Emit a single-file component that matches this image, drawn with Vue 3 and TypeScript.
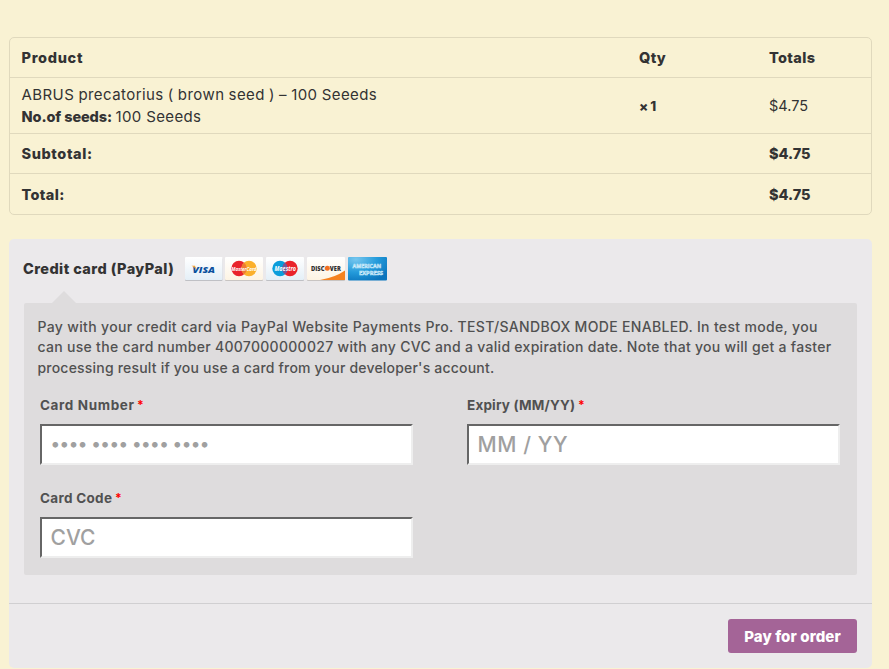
<script setup lang="ts">
import { ref } from 'vue'

interface OrderItem {
  name: string
  seeds: string
  qty: number
  total: string
}

const items: OrderItem[] = [
  { name: 'ABRUS precatorius ( brown seed ) – 100 Seeeds', seeds: '100 Seeeds', qty: 1, total: '$4.75' },
]
const sums = [
  { label: 'Subtotal:', cls: 'subtotal', value: '$4.75' },
  { label: 'Total:', cls: 'total', value: '$4.75' },
]
const notice = [
  'Pay with your credit card via PayPal Website Payments Pro. TEST/SANDBOX MODE ENABLED. In test mode, you',
  'can use the card number 4007000000027 with any CVC and a valid expiration date. Note that you will get a faster',
  "processing result if you use a card from your developer's account.",
]
const cardNumber = ref('')
const expiry = ref('')
const cvc = ref('')
</script>

<template>
  <main class="page">
    <section class="order">
      <div class="row head">
        <span class="h-product">Product</span><span class="h-qty">Qty</span><span class="h-totals">Totals</span>
      </div>
      <div v-for="item in items" :key="item.name" class="row item">
        <div class="product">
          <div class="name">{{ item.name }}</div>
          <div class="variation"><b>No.of seeds:</b><span>{{ item.seeds }}</span></div>
        </div>
        <b class="qty">× {{ item.qty }}</b>
        <span class="amount">{{ item.total }}</span>
      </div>
      <div v-for="sum in sums" :key="sum.label" class="row sum" :class="sum.cls">
        <span class="sum-label">{{ sum.label }}</span><span></span><span class="sum-value">{{ sum.value }}</span>
      </div>
    </section>

    <section class="payment">
      <div class="method">
        <span class="method-name">Credit card (PayPal)</span>
        <div class="cards">
          <svg width="39" height="25" viewBox="0 0 39 25">
            <defs><linearGradient id="pale" x2="0" y2="1"><stop stop-color="#fff" /><stop offset="1" stop-color="#e4eff7" /></linearGradient></defs>
            <rect x="1" y="2" width="37.500" height="23" rx="1" fill="#bfc0c5" />
            <rect x="1" y="1" width="37.500" height="23" rx="1" fill="url(#pale)" />
            <text x="8.500" y="17" class="visa" textLength="22.500" lengthAdjust="spacingAndGlyphs">VISA</text>
            <path d="M7.500 9.800h3.500l1.300 4.200Q11 11 7.500 9.800Z" fill="#f5a12c" />
          </svg>
          <svg width="39" height="25" viewBox="0 0 39 25">
            <defs><linearGradient id="cream" x2="0" y2="1"><stop stop-color="#fff" /><stop offset="1" stop-color="#fdf4e3" /></linearGradient></defs>
            <rect y="2" width="38" height="23" rx="1" fill="#c8c4c2" />
            <rect y="1" width="38" height="23" rx="1" fill="url(#cream)" />
            <circle cx="14" cy="12.500" r="7.700" fill="#e9232c" /><circle cx="24" cy="12.500" r="7.700" fill="#fbb02b" />
            <path d="M19 6.600a7.700 7.700 0 0 1 0 11.800 7.700 7.700 0 0 1 0-11.800Z" fill="#ef7a32" />
            <text x="6.500" y="15" class="brand mc" textLength="25" lengthAdjust="spacingAndGlyphs">MasterCard</text>
          </svg>
          <svg width="39" height="25" viewBox="0 0 39 25">
            <rect y="2" width="38" height="23" rx="1" fill="#bfc0c5" />
            <rect y="1" width="38" height="23" rx="1" fill="url(#pale)" />
            <circle cx="14" cy="12.500" r="7.700" fill="#0a9ddb" /><circle cx="24" cy="12.500" r="7.700" fill="#e9232c" />
            <path d="M19 6.600a7.700 7.700 0 0 1 0 11.800 7.700 7.700 0 0 1 0-11.800Z" fill="#74589a" />
            <text x="8.500" y="15" class="brand" textLength="21.500" lengthAdjust="spacingAndGlyphs">Maestro</text>
          </svg>
          <svg width="39" height="25" viewBox="0 0 39 25">
            <rect y="2" width="38" height="23" rx="1" fill="#c8c4c2" />
            <rect y="1" width="38" height="23" rx="1" fill="url(#cream)" />
            <path d="M13 24Q28 21.500 38 14.500V24Z" fill="#f58220" />
            <circle cx="20.300" cy="12.200" r="2.500" fill="#f26f21" />
            <text x="4" y="14.700" class="discover" textLength="13.500" lengthAdjust="spacingAndGlyphs">DISC</text>
            <text x="22.800" y="14.700" class="discover" textLength="11" lengthAdjust="spacingAndGlyphs">VER</text>
          </svg>
          <svg width="40" height="25" viewBox="0 0 40 25">
            <defs><radialGradient id="amex" cx=".2" cy=".1" r="1"><stop stop-color="#76c6ee" /><stop offset=".55" stop-color="#249bdb" /><stop offset="1" stop-color="#0b75bd" /></radialGradient></defs>
            <rect y="1" width="39" height="23.500" rx="1" fill="url(#amex)" />
            <text x="4.500" y="12" class="amex" textLength="28.500" lengthAdjust="spacingAndGlyphs">AMERICAN</text>
            <text x="11" y="18.500" class="amex" textLength="24" lengthAdjust="spacingAndGlyphs">EXPRESS</text>
          </svg>
        </div>
      </div>

      <div class="box">
        <svg class="arrow" width="24" height="12" viewBox="0 0 24 12"><path d="M0 12 12 0 24 12Z" fill="#dedcdd" /></svg>
        <p class="notice"><span v-for="(line, i) in notice" :key="i" :class="'line' + i">{{ line }}</span></p>
        <form class="fields" @submit.prevent>
          <label><span class="label"><b class="l-number">Card Number</b><i>*</i></span>
            <input v-model="cardNumber" class="number" placeholder="•••• •••• •••• ••••" /></label>
          <label><span class="label"><b class="l-expiry">Expiry (MM/YY)</b><i>*</i></span>
            <input v-model="expiry" class="expiry" placeholder="MM / YY" /></label>
          <label><span class="label"><b class="l-code">Card Code</b><i>*</i></span>
            <input v-model="cvc" class="cvc" placeholder="CVC" /></label>
        </form>
      </div>

      <footer class="actions"><button type="button"><span>Pay for order</span></button></footer>
    </section>
  </main>
</template>

<style>
body { background: #f9f2d3; }
</style>

<style scoped>
* { box-sizing: border-box; }
.page { height: 669px; padding: 37px 17px 0 9px; overflow: hidden; font-family: Inter, "Liberation Sans", sans-serif; font-size: 15px; color: #333; white-space: nowrap; }
.order { height: 178px; border: 1px solid #e0d9bd; border-radius: 5px; }
.row { display: grid; grid-template-columns: 617.5px 130px 1fr; align-items: center; padding-left: 11.500px; border-top: 1px solid #e0d9bd; }
.head { height: 39px; border-top: 0; font-weight: 800; font-size: 14.5px; }
.h-product { letter-spacing: .7px; }
.h-totals { letter-spacing: .35px; }
.item { height: 56px; font-size: 14.5px; }
.h-qty { letter-spacing: .3px; }
.name, .variation { height: 22px; line-height: 22px; font-size: 15px; letter-spacing: .37px; }
.name { word-spacing: -.5px; letter-spacing: .43px; }
.variation { display: flex; gap: 3.500px; }
.variation b { font-size: 14.5px; font-weight: 800; letter-spacing: -.1px; }
.qty { font-size: 13.500px; letter-spacing: -.5px; font-weight: 800; }
.sum { height: 40px; font-weight: 800; font-size: 14.5px; }
.subtotal .sum-label { letter-spacing: .6px; }
.total .sum-label { letter-spacing: .35px; }
.total { height: 41px; }
.payment { height: 429px; margin-top: 24px; background: #ebe9eb; border-radius: 5px; }
.method { height: 64px; padding: 17px 0 0 14px; display: flex; }
.method-name { width: 161px; font-weight: 800; font-size: 14.5px; line-height: 26px; letter-spacing: .42px; }
.cards { display: flex; gap: 2px; }
.cards svg { display: block; }
.visa { font: italic 800 9.500px "Open Sans", sans-serif; fill: #0b519e; }
.brand { font: italic 700 6.500px "Open Sans", sans-serif; fill: #fff; }
.mc { font-size: 6px; }
.discover { font: 800 7px "Open Sans", sans-serif; fill: #303030; }
.amex { font: 700 5.500px "Open Sans", sans-serif; fill: #69bce8; stroke: #d3edfa; stroke-width: .5px; }
.box { position: relative; width: 833px; height: 272px; margin-left: 15px; padding: 14px 13.500px 0; border-radius: 2px; background: #dedcdd; color: #515151; }
.arrow { position: absolute; left: 28px; top: -12px; }
.notice { margin: 0; height: 62px; display: grid; grid-template-rows: 20px 21px 20px; font-size: 14px; font-weight: 500; line-height: 20px; }
.line0 { letter-spacing: .335px; }
.line1 { letter-spacing: .295px; }
.line2 { letter-spacing: .2px; }
.fields { display: grid; grid-template-columns: 373px 373px; column-gap: 54px; padding: 16px 0 0 2.500px; row-gap: 24px; }
.fields label { display: block; height: 69px; }
.label { display: flex; height: 29px; line-height: 20px; font-size: 13.5px; }
.l-number { width: 97px; letter-spacing: .62px; }
.l-expiry { width: 111px; letter-spacing: .18px; }
.l-code { width: 75px; letter-spacing: .3px; }
.label i { font-style: normal; font-weight: 700; color: #f00; font-size: 12px; }
input { display: block; width: 373px; height: 41px; margin: 0; padding: 0 8.500px; border: 2px solid; border-color: #666 #eee #eee #666; background: #fff; font: 500 21px Inter, sans-serif; color: #333; outline: 0; }
input::placeholder { color: #a0a0a0; opacity: 1; }
.number { font-size: 18px; letter-spacing: -.5px; padding-bottom: 2px; }
.expiry { letter-spacing: .6px; }
.actions { height: 66px; margin-top: 28px; padding: 15px 15px 0; border-top: 1px solid #d0cfd1; display: flex; justify-content: flex-end; }
button { width: 129px; height: 34px; border: 0; border-radius: 3px; background: #a46497; color: #fff; font: 800 15px Inter, sans-serif; letter-spacing: .1px; padding: 0; }
</style>
